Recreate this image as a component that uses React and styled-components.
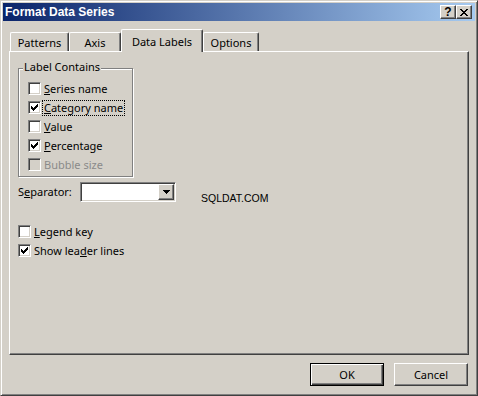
import React from "react";
import styled, { createGlobalStyle } from "styled-components";

const Global = createGlobalStyle`
  html, body { margin: 0; padding: 0; background: #d4d0c8; }
  body { font-family: "Noto Sans", "Open Sans", sans-serif; font-size: 11px; color: #000; }
  * { box-sizing: border-box; }
`;

const Window = styled.div`
  width: 478px;
  height: 396px;
  display: flex;
  flex-direction: column;
  background: #d4d0c8;
  border: 1px solid;
  border-color: #d4d0c8 #404040 #404040 #d4d0c8;
  box-shadow: inset 1px 1px #fff, inset -1px -1px #808080;
  padding: 2px;
`;

const TitleBar = styled.div`
  height: 18px;
  flex: none;
  display: flex;
  align-items: center;
  padding: 0 3px 0 2px;
  background: linear-gradient(to right, #0a246a, #a6caf0);
`;

const Title = styled.div`
  flex: 1;
  color: #fff;
  font-family: "Liberation Sans", Arial, sans-serif;
  font-weight: bold;
  font-size: 12px;
  line-height: 14px;
`;

const CaptionButtons = styled.div`
  display: flex;
`;

const raised = `
  border: 1px solid;
  border-color: #fff #404040 #404040 #fff;
  box-shadow: inset -1px -1px #808080;
  background: #d4d0c8;
`;

const CaptionButton = styled.div`
  width: 16px;
  height: 14px;
  ${raised}
  display: flex;
  align-items: center;
  justify-content: center;
  font-family: "Liberation Sans", Arial, sans-serif;
  font-weight: bold;
  font-size: 12px;
  line-height: 12px;
  color: #000;
  padding-bottom: ${(p) => (p.$help ? "1px" : "0")};
`;

const Body = styled.div`
  flex: 1;
  display: flex;
  flex-direction: column;
  padding: 8px 6px 7px 6px;
`;

const TabRow = styled.div`
  height: 22px;
  display: flex;
  align-items: flex-end;
  padding-left: 1px;
  position: relative;
  z-index: 1;
`;

const Tab = styled.div`
  width: ${(p) => p.$w}px;
  height: ${(p) => (p.$active ? 23 : 19)}px;
  margin-bottom: ${(p) => (p.$active ? -1 : 0)}px;
  background: #d4d0c8;
  border-left: 1px solid #fff;
  border-top: 1px solid #fff;
  border-right: 1px solid #404040;
  box-shadow: inset -1px 0 #808080;
  border-top-left-radius: 2px;
  border-top-right-radius: 2px;
  text-align: center;
  line-height: 15px;
  padding-top: ${(p) => (p.$active ? 4 : 2)}px;
`;

const Panel = styled.div`
  flex: none;
  width: 460px;
  height: 304px;
  border-top: 1px solid #fff;
  border-left: 1px solid #fff;
  border-right: 1px solid #404040;
  border-bottom: 1px solid #404040;
  box-shadow: inset -1px -1px #808080;
  padding: 0 8px;
  display: flex;
  flex-direction: column;
  align-items: flex-start;
`;

const GroupBox = styled.div`
  position: relative;
  margin-top: 16px;
  width: 115px;
  height: 109px;
  border: 1px solid #808080;
  box-shadow: inset 1px 1px #fff, 1px 1px #fff;
  padding: 10px 0 0 9px;
`;

const GroupTitle = styled.div`
  position: absolute;
  top: -9px;
  left: 4px;
  padding: 0 1px;
  line-height: 14px;
  background: #d4d0c8;
`;

const CheckRow = styled.div`
  height: 19px;
  display: flex;
  align-items: center;
`;

const Box = styled.div`
  width: 13px;
  height: 13px;
  flex: none;
  border: 1px solid;
  border-color: #808080 #fff #fff #808080;
  box-shadow: inset 1px 1px #404040, inset -1px -1px #d4d0c8;
  background: ${(p) => (p.$disabled ? "#d4d0c8" : "#fff")};
  position: relative;
`;

const Label = styled.span`
  margin-left: 1px;
  padding: 0 1px;
  border: 1px dotted ${(p) => (p.$focus ? "#000" : "transparent")};
  line-height: 14px;
  white-space: nowrap;
  color: ${(p) => (p.$disabled ? "#8a8a8a" : "#000")};
`;

const U = styled.span`
  text-decoration: underline;
  text-underline-offset: 1px;
`;

const CheckMark = () => (
  <svg width="7" height="7" viewBox="0 0 7 7" style={{ position: "absolute", left: 2, top: 2 }} shapeRendering="crispEdges">
    <path d="M6 0h1v1h-1z M5 1h2v1h-2z M0 2h1v1h-1z M4 2h3v1h-3z M0 3h2v1h-2z M3 3h3v1h-3z M0 4h5v1h-5z M1 5h3v1h-3z M2 6h1v1h-1z" fill="#000" />
  </svg>
);

const Check = ({ checked, disabled, focus, children }) => (
  <CheckRow>
    <Box $disabled={disabled}>{checked && <CheckMark />}</Box>
    <Label $focus={focus} $disabled={disabled}>{children}</Label>
  </CheckRow>
);

const SeparatorRow = styled.div`
  margin-top: 5px;
  height: 20px;
  display: flex;
  align-items: center;
`;

const FieldLabel = styled.span`
  width: 62px;
  line-height: 14px;
`;

const Combo = styled.div`
  width: 96px;
  height: 20px;
  border: 1px solid;
  border-color: #808080 #fff #fff #808080;
  box-shadow: inset 1px 1px #404040, inset -1px -1px #d4d0c8;
  background: #fff;
  padding: 2px;
  display: flex;
  justify-content: flex-end;
`;

const DropButton = styled.div`
  width: 16px;
  height: 16px;
  margin: -1px -1px 0 0;
  ${raised}
  display: flex;
  align-items: center;
  justify-content: center;
`;

const Watermark = styled.span`
  align-self: flex-end;
  margin-left: 25px;
  margin-bottom: -2px;
  font-family: "Liberation Sans", Arial, sans-serif;
  font-size: 10.5px;
  line-height: 12px;
`;

const LowerChecks = styled.div`
  margin-top: 20px;
  display: flex;
  flex-direction: column;
`;

const ButtonRow = styled.div`
  margin-top: 8px;
  display: flex;
  justify-content: flex-end;
  gap: 10px;
  padding-right: 1px;
`;

const DialogButton = styled.div`
  width: 74px;
  height: 23px;
  display: flex;
  align-items: center;
  justify-content: center;
  background: #d4d0c8;
  line-height: 14px;
  ${(p) =>
    p.$default
      ? `border: 1px solid #000;
         box-shadow: inset 1px 1px #fff, inset -1px -1px #404040, inset -2px -2px #808080;`
      : `border: 1px solid;
         border-color: #fff #404040 #404040 #fff;
         box-shadow: inset -1px -1px #808080;`}
`;

export default function App() {
  return (
    <>
      <Global />
      <Window>
        <TitleBar>
          <Title>Format Data Series</Title>
          <CaptionButtons>
            <CaptionButton $help>?</CaptionButton>
            <CaptionButton>
              <svg width="8" height="7" viewBox="0 0 8 7" shapeRendering="crispEdges">
                <path d="M0 0h2v1h-2z M6 0h2v1h-2z M1 1h2v1h-2z M5 1h2v1h-2z M2 2h4v1h-4z M3 3h2v1h-2z M2 4h4v1h-4z M1 5h2v1h-2z M5 5h2v1h-2z M0 6h2v1h-2z M6 6h2v1h-2z" fill="#000" />
              </svg>
            </CaptionButton>
          </CaptionButtons>
        </TitleBar>
        <Body>
          <TabRow>
            <Tab $w={59}>Patterns</Tab>
            <Tab $w={52}>Axis</Tab>
            <Tab $w={82} $active>Data Labels</Tab>
            <Tab $w={56}>Options</Tab>
          </TabRow>
          <Panel>
            <GroupBox>
              <GroupTitle>Label Contains</GroupTitle>
              <Check><U>S</U>eries name</Check>
              <Check checked focus><U>C</U>ategory name</Check>
              <Check><U>V</U>alue</Check>
              <Check checked><U>P</U>ercentage</Check>
              <Check disabled>Bubble size</Check>
            </GroupBox>
            <SeparatorRow>
              <FieldLabel>S<U>e</U>parator:</FieldLabel>
              <Combo>
                <DropButton>
                  <svg width="7" height="4" viewBox="0 0 7 4" shapeRendering="crispEdges">
                    <path d="M0 0h7v1h-7z M1 1h5v1h-5z M2 2h3v1h-3z M3 3h1v1h-1z" fill="#000" />
                  </svg>
                </DropButton>
              </Combo>
              <Watermark>SQLDAT.COM</Watermark>
            </SeparatorRow>
            <LowerChecks>
              <Check><U>L</U>egend key</Check>
              <Check checked>Show lea<U>d</U>er lines</Check>
            </LowerChecks>
          </Panel>
          <ButtonRow>
            <DialogButton $default>OK</DialogButton>
            <DialogButton>Cancel</DialogButton>
          </ButtonRow>
        </Body>
      </Window>
    </>
  );
}
